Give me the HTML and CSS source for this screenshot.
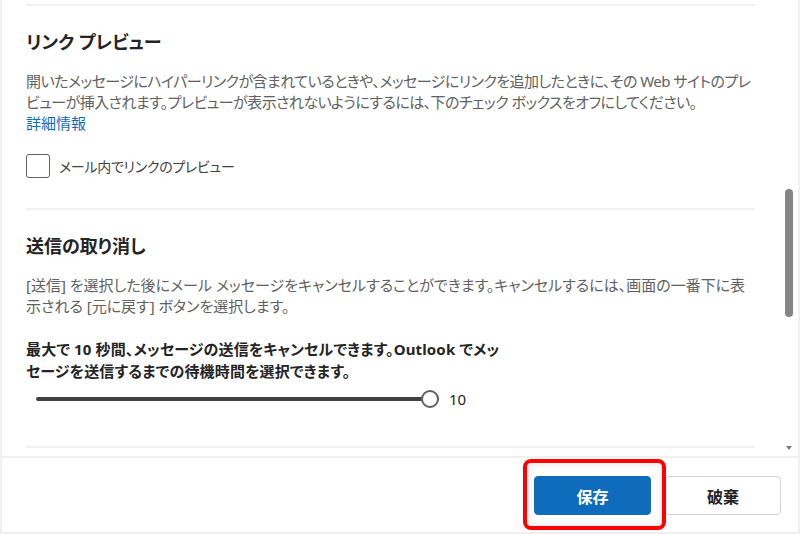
FILE: index.html
```html
<!DOCTYPE html>
<html lang="ja">
<head>
<meta charset="utf-8">
<title>設定</title>
<link rel="stylesheet" href="styles.css">
</head>
<body>
<div class="panel">
  <div class="scroll">
    <div class="content">
      <section class="section first">
        <h2 class="heading">リンク プレビュー</h2>
        <p class="desc">開いたメッセージにハイパーリンクが含まれているときや、メッセージにリンクを追加したときに、その Web サイトのプレビューが挿入されます。プレビューが表示されないようにするには、下のチェック ボックスをオフにしてください。</p>
        <a class="link" href="#">詳細情報</a>
        <label class="check">
          <span class="box"></span>
          <span class="check-label">メール内でリンクのプレビュー</span>
        </label>
      </section>
      <section class="section">
        <h2 class="heading">送信の取り消し</h2>
        <p class="desc desc-wide">[送信] を選択した後にメール メッセージをキャンセルすることができます。キャンセルするには、画面の一番下に表示される [元に戻す] ボタンを選択します。</p>
        <p class="strong">最大で 10 秒間、メッセージの送信をキャンセルできます。Outlook でメッセージを送信するまでの待機時間を選択できます。</p>
        <div class="slider-row">
          <div class="slider">
            <div class="track"></div>
            <div class="thumb"></div>
          </div>
          <span class="value">10</span>
        </div>
      </section>
      <div class="sep"></div>
    </div>
    <div class="scrollbar-thumb"></div>
    <div class="scroll-arrow"></div>
  </div>
  <div class="footer">
    <button class="btn primary">保存</button>
    <button class="btn">破棄</button>
    <div class="highlight"></div>
  </div>
</div>
</body>
</html>
```
FILE: styles.css
```css
* { box-sizing: border-box; }
html, body { margin: 0; padding: 0; background: #ffffff; }
body {
  font-family: "Noto Sans", "Noto Sans CJK JP", sans-serif;
  font-feature-settings: "palt";
  color: #242424;
}
.panel {
  width: 800px;
  height: 534px;
  border-left: 2px solid #f0f0f0;
  border-right: 2px solid #f0f0f0;
  border-bottom: 2px solid #f0f0f0;
  display: flex;
  flex-direction: column;
  overflow: hidden;
}
.scroll {
  position: relative;
  height: 458px;
  border-bottom: 2px solid #f0f0f0;
  overflow: hidden;
}
.content {
  margin: 0 43px 0 24px;
  padding-top: 4px;
}
.section {
  border-top: 2px solid #f2f2f2;
  padding-top: 24px;
}
.section.first { padding-bottom: 30px; }
.heading {
  margin: 0;
  font-size: 18px;
  line-height: 24px;
  font-weight: 700;
  color: #242424;
}
.desc {
  margin: 17px 0 0;
  font-size: 15px;
  line-height: 21px;
  letter-spacing: -0.55px;
  color: #616161;
}
.desc-wide { letter-spacing: 0; }
.link {
  display: block;
  font-size: 15px;
  line-height: 21px;
  color: #0f6cbd;
  text-decoration: none;
}
.check {
  display: flex;
  align-items: center;
  gap: 9px;
  margin-top: 20px;
}
.box {
  width: 24px;
  height: 24px;
  border: 1px solid #616161;
  border-radius: 3px;
  background: #fff;
}
.check-label {
  font-size: 14px;
  line-height: 21px;
  letter-spacing: -0.3px;
  color: #424242;
}
.strong {
  margin: 21px 0 0;
  font-size: 15px;
  line-height: 22px;
  font-weight: 700;
  letter-spacing: 0.15px;
  width: 484px;
  color: #242424;
}
.slider-row {
  display: flex;
  align-items: center;
  gap: 10px;
  margin-top: 7px;
  height: 20px;
  padding-left: 10px;
}
.slider {
  position: relative;
  width: 403px;
  height: 18px;
  display: flex;
  align-items: center;
}
.track {
  width: 100%;
  height: 4px;
  border-radius: 2px;
  background: #424242;
}
.thumb {
  position: absolute;
  right: 0;
  top: 0;
  width: 18px;
  height: 18px;
  border-radius: 50%;
  background: #fff;
  border: 2px solid #616161;
}
.value {
  font-size: 15px;
  color: #242424;
}
.sep {
  margin-top: 37px;
  border-top: 2px solid #f2f2f2;
}
.scrollbar-thumb {
  position: absolute;
  left: 783px;
  top: 189px;
  width: 8px;
  height: 128px;
  border-radius: 4px;
  background: #858585;
}
.scroll-arrow {
  position: absolute;
  left: 784px;
  top: 446px;
  width: 0;
  height: 0;
  border-left: 3px solid transparent;
  border-right: 3px solid transparent;
  border-top: 4px solid #7a7a7a;
}
.footer {
  position: relative;
  flex: 1;
  display: flex;
  justify-content: flex-end;
  align-items: flex-start;
  gap: 14px;
  padding: 18px 17px 0 0;
}
.btn {
  width: 116px;
  height: 39px;
  border: 1px solid #d1d1d1;
  border-radius: 4px;
  background: #fff;
  font-family: inherit;
  font-feature-settings: "palt";
  font-size: 16px;
  font-weight: 700;
  color: #242424;
}
.btn.primary {
  width: 117px;
  background: #0f6cbd;
  border-color: #0f6cbd;
  color: #fff;
}
.highlight {
  position: absolute;
  left: 521px;
  top: 1px;
  width: 143px;
  height: 71px;
  border: 4px solid #ff0000;
  border-radius: 8px;
  box-shadow: inset 0 0 10px rgba(0,0,0,0.12);
  pointer-events: none;
}
```
